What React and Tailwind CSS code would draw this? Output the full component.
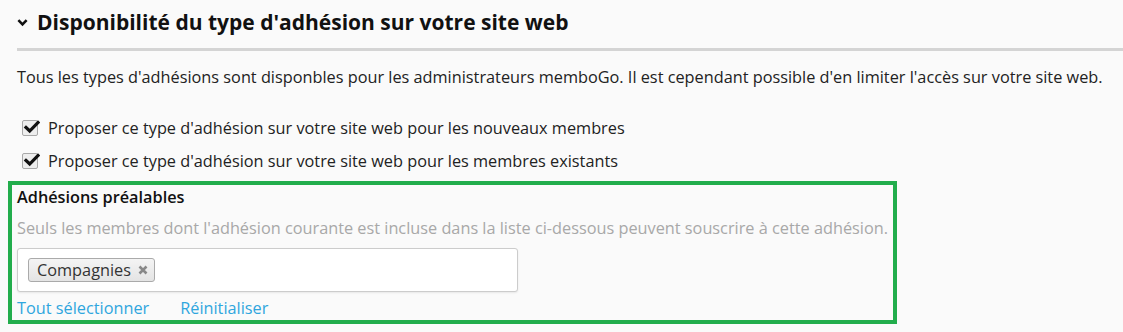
import React from 'react';

const Check = () => (
  <span className="relative flex h-[16px] w-[16px] shrink-0 items-center justify-center rounded-[2px] border border-[#a9a9a9] bg-[#eeeeee]">
    <svg viewBox="0 0 16 16" className="absolute left-[0px] top-[-2px] h-[16px] w-[17px]">
      <path d="M2.5 8.5 L6.2 12 L14.5 3.5" fill="none" stroke="#111" strokeWidth="3.2" strokeLinecap="square" />
    </svg>
  </span>
);

const CheckRow = ({ label }) => (
  <label className="flex h-[22px] items-center">
    <span className="ml-[5px] mr-[10px]">
      <Check />
    </span>
    <span>{label}</span>
  </label>
);

export default function App() {
  return (
    <div
      className="h-[332px] w-full overflow-hidden bg-[#fafafa] text-[16.3px] leading-[22px] text-[#222]"
      style={{ fontFamily: '"Open Sans", "Noto Sans", sans-serif' }}
    >
      {/* Section header */}
      <div className="mt-[10px] flex h-[24px] items-center pl-[17px]">
        <svg viewBox="0 0 12 12" className="mr-[9px] h-[11px] w-[11px]">
          <path d="M1.5 3.5 L6 8 L10.5 3.5" fill="none" stroke="#111" strokeWidth="2.8" />
        </svg>
        <h2 className="text-[21px] font-bold leading-[24px] text-[#111]">
          Disponibilité du type d'adhésion sur votre site web
        </h2>
      </div>
      <div className="ml-[17px] mt-[14px] h-[3px] bg-[#d4d4d4]" />

      <p className="mt-[15px] pl-[17px]">
        Tous les types d'adhésions sont disponbles pour les administrateurs memboGo. Il est cependant possible d'en limiter l'accès sur votre site web.
      </p>

      <div className="mt-[29px] flex flex-col gap-[11px] pl-[17px]">
        <CheckRow label="Proposer ce type d'adhésion sur votre site web pour les nouveaux membres" />
        <CheckRow label="Proposer ce type d'adhésion sur votre site web pour les membres existants" />
      </div>

      {/* Highlighted block */}
      <div className="ml-[8px] mt-[9px] w-[889px] border-[4px] border-[#22ad4c] pb-[2px] pl-[5px] pt-[1px]">
        <div className="font-semibold text-[#111]">Adhésions préalables</div>
        <div className="mt-[9px] text-[#a8a8a8]">
          Seuls les membres dont l'adhésion courante est incluse dans la liste ci-dessous peuvent souscrire à cette adhésion.
        </div>
        <div className="mt-[9px] flex h-[44px] w-[501px] items-center rounded-[3px] border border-[#cccccc] bg-white pl-[10px] shadow-[0_1px_2px_rgba(0,0,0,0.08)]">
          <span className="flex h-[24px] items-center rounded-[3px] border border-[#aaaaaa] bg-gradient-to-b from-[#f4f4f4] to-[#e4e4e4] pl-[8px] pr-[6px] text-[#333]">
            Compagnies
            <svg viewBox="0 0 10 10" className="ml-[7px] h-[10px] w-[10px]">
              <path d="M1.5 1.5 L8.5 8.5 M8.5 1.5 L1.5 8.5" stroke="#888" strokeWidth="2.6" />
            </svg>
          </span>
        </div>
        <div className="mt-[6px] flex gap-[31px] leading-[20px] text-[#2fa6de]">
          <a href="#">Tout sélectionner</a>
          <a href="#">Réinitialiser</a>
        </div>
      </div>
    </div>
  );
}
